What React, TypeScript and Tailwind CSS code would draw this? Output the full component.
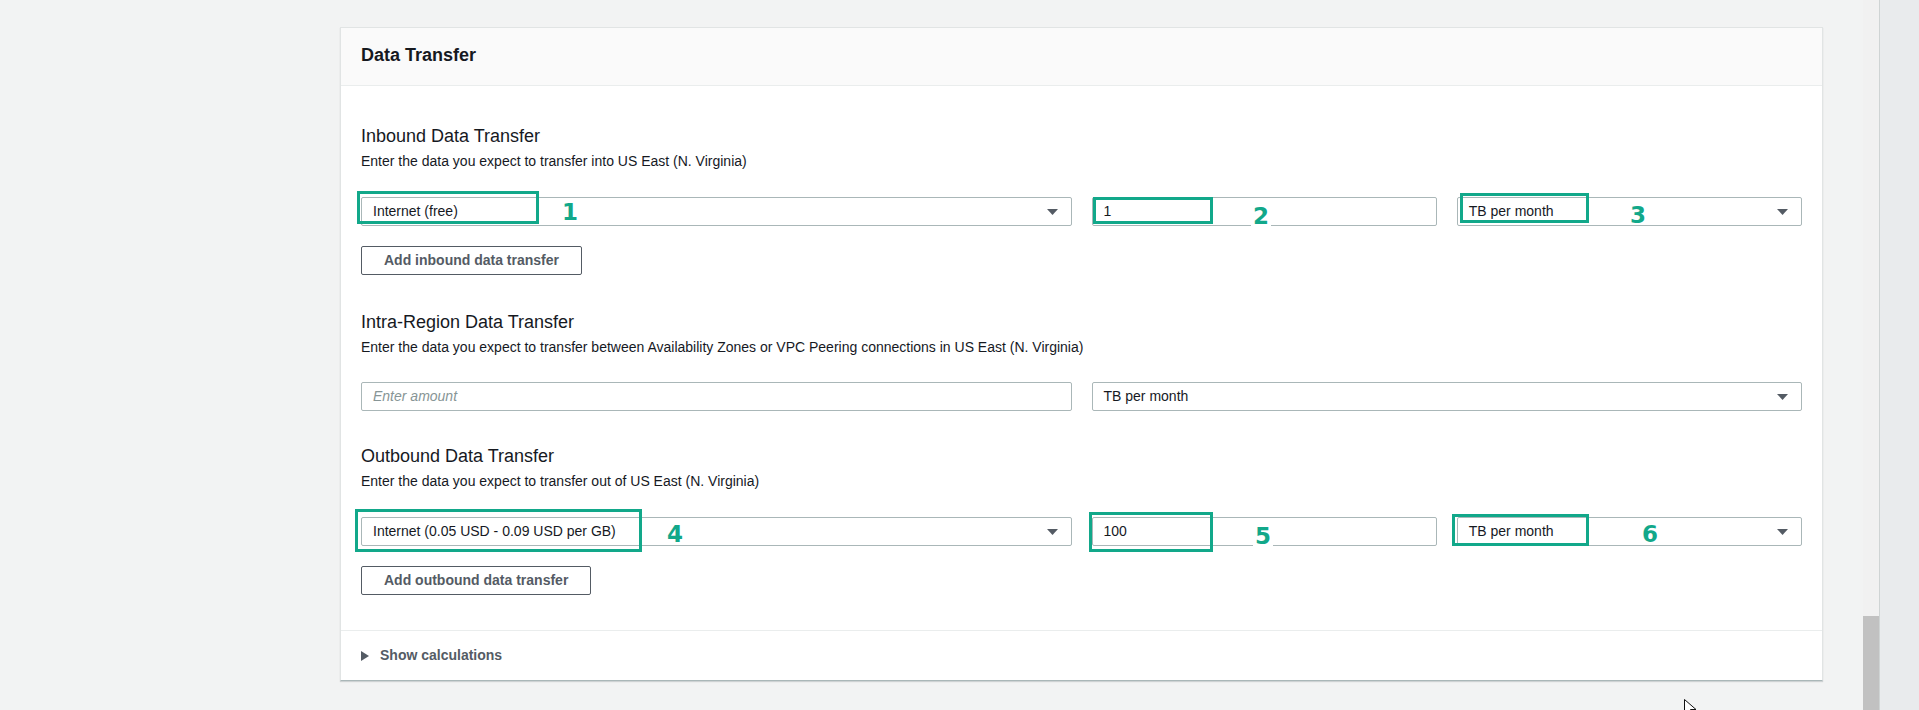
import React from 'react';

const FONT = "font-['Liberation_Sans',Arial,sans-serif]";

// Small filled caret used by the dropdowns
const Caret = () => (
  <svg width="11" height="6" viewBox="0 0 11 6" className="shrink-0">
    <path d="M0 0h11L5.5 6z" fill="#545b64" />
  </svg>
);

const SelectBox = ({ value, className = '' }: { value: string; className?: string }) => (
  <div
    className={`h-[29px] flex items-center justify-between pl-[11px] pr-[13px] bg-white border border-[#aab7b8] rounded-[2px] text-[14px] text-[#16191f] ${className}`}
  >
    <span>{value}</span>
    <Caret />
  </div>
);

const TextBox = ({ value, placeholder, className = '' }: { value?: string; placeholder?: string; className?: string }) => (
  <div
    className={`h-[29px] flex items-center pl-[11px] bg-white border border-[#aab7b8] rounded-[2px] text-[14px] ${className}`}
  >
    {value ? (
      <span className="text-[#16191f]">{value}</span>
    ) : (
      <span className="italic text-[#879596]">{placeholder}</span>
    )}
  </div>
);

const Section = ({ title, desc, children }: { title: string; desc: string; children: React.ReactNode }) => (
  <div>
    <h3 className="text-[18px] leading-[22px] text-[#16191f]">{title}</h3>
    <p className="mt-[4px] text-[14px] leading-[20px] text-[#16191f]">{desc}</p>
    {children}
  </div>
);

const OutlineButton = ({ label }: { label: string }) => (
  <button className="h-[29px] px-[22px] border border-[#545b64] rounded-[2px] bg-white text-[14px] font-bold text-[#545b64]">
    {label}
  </button>
);

// Green annotation boxes and numbers drawn over the screenshot
const marks = [
  { box: 'left-[357px] top-[191px] w-[182px] h-[33px]', num: '1', pos: 'left-[562px] top-[199px]', cover: false },
  { box: 'left-[1093px] top-[197px] w-[120px] h-[27px]', num: '2', pos: 'left-[1251px] top-[203px]', cover: true },
  { box: 'left-[1460px] top-[193px] w-[129px] h-[30px]', num: '3', pos: 'left-[1630px] top-[202px]', cover: false },
  { box: 'left-[355px] top-[509px] w-[287px] h-[43px]', num: '4', pos: 'left-[667px] top-[521px]', cover: false },
  { box: 'left-[1089px] top-[512px] w-[124px] h-[40px]', num: '5', pos: 'left-[1253px] top-[523px]', cover: true },
  { box: 'left-[1452px] top-[514px] w-[137px] h-[32px]', num: '6', pos: 'left-[1642px] top-[521px]', cover: false },
];

export default function App() {
  return (
    <div className={`relative flex h-[710px] w-[1919px] overflow-hidden bg-[#f2f3f3] ${FONT}`}>
      {/* Main scroll area */}
      <div className="flex-1 pt-[27px] pl-[340px] pr-[40px]">
        <div className="bg-white border border-[#e1e4e4] border-b-[#aab7b8] shadow-[0_1px_1px_0_rgba(0,28,36,0.15)]">
          <div className="h-[58px] flex items-center px-[20px] bg-[#fafafa] border-b border-[#eaeded]">
            <h2 className="text-[18px] font-bold text-[#16191f] pb-[2px]">Data Transfer</h2>
          </div>

          <div className="px-[20px] pt-[39px] pb-[35px]">
            <Section title="Inbound Data Transfer" desc="Enter the data you expect to transfer into US East (N. Virginia)">
              <div className="mt-[26px] grid grid-cols-4 gap-x-[20px]">
                <SelectBox value="Internet (free)" className="col-span-2" />
                <TextBox value="1" />
                <SelectBox value="TB per month" />
              </div>
              <div className="mt-[20px]">
                <OutlineButton label="Add inbound data transfer" />
              </div>
            </Section>

            <div className="mt-[36px]">
              <Section
                title="Intra-Region Data Transfer"
                desc="Enter the data you expect to transfer between Availability Zones or VPC Peering connections in US East (N. Virginia)"
              >
                <div className="mt-[25px] grid grid-cols-4 gap-x-[20px]">
                  <TextBox placeholder="Enter amount" className="col-span-2" />
                  <SelectBox value="TB per month" className="col-span-2" />
                </div>
              </Section>
            </div>

            <div className="mt-[34px]">
              <Section title="Outbound Data Transfer" desc="Enter the data you expect to transfer out of US East (N. Virginia)">
                <div className="mt-[26px] grid grid-cols-4 gap-x-[20px]">
                  <SelectBox value="Internet (0.05 USD - 0.09 USD per GB)" className="col-span-2" />
                  <TextBox value="100" />
                  <SelectBox value="TB per month" />
                </div>
                <div className="mt-[20px]">
                  <OutlineButton label="Add outbound data transfer" />
                </div>
              </Section>
            </div>
          </div>

          <div className="h-[50px] flex items-center gap-[11px] px-[20px] border-t border-[#eaeded]">
            <svg width="8" height="10" viewBox="0 0 8 10">
              <path d="M0 0l8 5-8 5z" fill="#545b64" />
            </svg>
            <span className="text-[14px] font-bold text-[#545b64]">Show calculations</span>
          </div>
        </div>
      </div>

      {/* Scrollbar */}
      <div className="w-[16px] flex flex-col bg-[#f1f1f1]">
        <div className="h-[616px]" />
        <div className="flex-1 bg-[#c1c1c1]" />
      </div>
      <div className="w-[40px] bg-[#e9ebed] border-l border-[#cfd4d4]" />

      {/* Annotation overlays */}
      {marks.map((m) => (
        <React.Fragment key={m.num}>
          <div className={`absolute ${m.box} border-[3px] border-[#12a88a]`} />
          <div
            className={`absolute ${m.pos} ${m.cover ? 'bg-white px-[2px]' : ''} font-['DejaVu_Sans',sans-serif] font-bold text-[23px] leading-[26px] text-[#12a88a]`}
          >
            {m.num}
          </div>
        </React.Fragment>
      ))}

      {/* Mouse pointer */}
      <svg className="absolute left-[1684px] top-[699px]" width="12" height="18" viewBox="0 0 12 18">
        <path d="M0.5 0.5v15l4-4 3 6 2-1-3-6h5.5z" fill="#fff" stroke="#111" strokeWidth="1" />
      </svg>
    </div>
  );
}
